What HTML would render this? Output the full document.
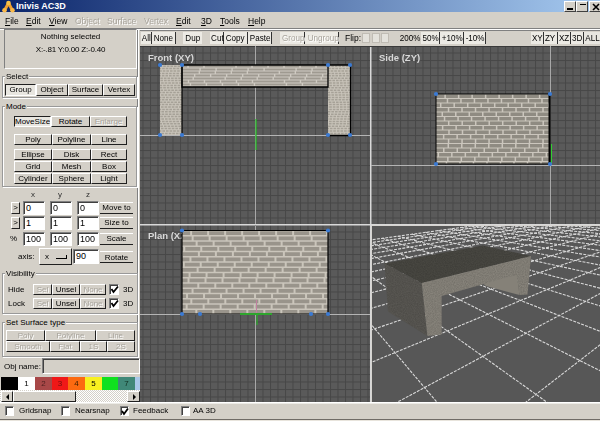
<!DOCTYPE html>
<html><head><meta charset="utf-8">
<style>
*{margin:0;padding:0;box-sizing:border-box}
html,body{width:600px;height:421px;overflow:hidden;background:#d4d0c8;font-family:"Liberation Sans",sans-serif;font-size:8px;color:#000}
.a{position:absolute}
.t{position:absolute;white-space:nowrap;line-height:10px}
.btn{position:absolute;border:1px solid;border-color:#fff #202020 #202020 #fff;background:#d4d0c8;text-align:center;line-height:9px;white-space:nowrap;overflow:hidden;font-size:8px}
.dis{color:#a8a49c;text-shadow:1px 1px 0 #fff}
.prs{border-color:#202020 #fff #fff #202020;background:#e8e6e0}
.grp{position:absolute;border:1px solid #999;box-shadow:1px 1px 0 #fff, inset 1px 1px 0 #fff}
.glab{position:absolute;background:#d4d0c8;padding:0 1px;line-height:9px;white-space:nowrap;margin-top:1px}
.fld{position:absolute;background:#fff;border:1px solid;border-color:#808080 #fff #fff #808080;box-shadow:inset 1px 1px 0 #404040;line-height:13px;padding-left:2px;white-space:nowrap;font-size:9px}
.tb{position:absolute;top:32px;height:12px;border-right:1px solid #303030;background:#eceae4;text-align:center;line-height:12px;white-space:nowrap;font-size:9.5px;overflow:visible}
.tb span{display:inline-block;transform:scaleX(.85);transform-origin:50% 50%}
.fb{position:absolute;border-top:1px solid #fff;border-bottom:1px solid #202020;text-align:center;line-height:10px;white-space:nowrap}
.cb{position:absolute;width:9px;height:10px;background:#fff;border:1px solid;border-color:#808080 #fff #fff #808080;box-shadow:inset 1px 1px 0 #404040}
.vp{position:absolute;overflow:hidden}
</style></head><body><div id="root" style="position:absolute;left:0;top:0;width:600px;height:421px;overflow:hidden;filter:blur(0.3px)">

<!-- title bar -->
<div class="a" style="left:0;top:0;width:600px;height:12px;background:linear-gradient(90deg,#0a246a 0%,#a6caf0 100%)"></div>
<svg class="a" style="left:2px;top:0" width="13" height="13" viewBox="0 0 13 13">
  <path d="M6.5 3 L2.5 10.5 M6.5 3 L10.5 10.5" stroke="#f0a030" stroke-width="3" stroke-linecap="round" fill="none"/>
  <circle cx="6.5" cy="3" r="2.3" fill="#f8c048"/>
  <circle cx="2.5" cy="10.3" r="2.3" fill="#f8b848"/>
  <circle cx="10.5" cy="10.3" r="2.3" fill="#f8b848"/>
</svg>
<div class="t" style="left:16px;top:1px;color:#fff;font-weight:bold;font-size:9px;letter-spacing:0">Inivis AC3D</div>
<div class="btn" style="left:564px;top:1px;width:12px;height:11px;border-color:#fff #404040 #404040 #fff"><div class="a" style="left:2px;top:6px;width:6px;height:1.5px;background:#000"></div></div>
<div class="btn" style="left:576px;top:1px;width:12px;height:11px;border-color:#fff #404040 #404040 #fff"><div class="a" style="left:3px;top:1.5px;width:6px;height:1.5px;background:#000"></div></div>
<div class="btn" style="left:589px;top:1px;width:12px;height:11px;border-color:#fff #404040 #404040 #fff"><svg class="a" style="left:2px;top:1px" width="8" height="8"><path d="M1 1 L7 7 M7 1 L1 7" stroke="#000" stroke-width="1.6"/></svg></div>

<!-- menu -->
<div class="t" style="left:5px;top:16px;font-size:8.5px"><u>F</u>ile</div>
<div class="t" style="left:26px;top:16px;font-size:8.5px"><u>E</u>dit</div>
<div class="t" style="left:49px;top:16px;font-size:8.5px"><u>V</u>iew</div>
<div class="t dis" style="left:75px;top:16px;font-size:8.5px">Object</div>
<div class="t dis" style="left:107px;top:16px;font-size:8.5px">Surface</div>
<div class="t dis" style="left:144px;top:16px;font-size:8.5px">Vertex</div>
<div class="t" style="left:176px;top:16px;font-size:8.5px"><u>E</u>dit</div>
<div class="t" style="left:201px;top:16px;font-size:8.5px"><u>3</u>D</div>
<div class="t" style="left:220px;top:16px;font-size:8.5px"><u>T</u>ools</div>
<div class="t" style="left:248px;top:16px;font-size:8.5px"><u>H</u>elp</div>
<div class="a" style="left:0;top:28px;width:600px;height:1px;background:#808080"></div>
<div class="a" style="left:0;top:29px;width:600px;height:1px;background:#fff"></div>

<!-- left panel -->
<div class="a" style="left:137px;top:30px;width:1px;height:328px;background:#808080"></div>
<div class="a" style="left:138px;top:30px;width:1px;height:328px;background:#fff"></div>

<div class="a" style="left:4px;top:29px;width:133px;height:40px;border:1px solid;border-color:#808080 #fff #fff #808080"></div>
<div class="t" style="left:4px;top:32px;width:133px;text-align:center">Nothing selected</div>
<div class="t" style="left:4px;top:45px;width:133px;text-align:center;letter-spacing:-0.2px">X:-.81 Y:0.00 Z:-0.40</div>

<div class="grp" style="left:2px;top:76px;width:135px;height:22px"></div>
<div class="glab" style="left:5px;top:71px">Select</div>
<div class="btn prs" style="left:5px;top:84px;width:31px;height:12px;line-height:10px">Group</div>
<div class="btn" style="left:36px;top:84px;width:32px;height:12px;line-height:10px">Object</div>
<div class="btn" style="left:68px;top:84px;width:35px;height:12px;line-height:10px">Surface</div>
<div class="btn" style="left:103px;top:84px;width:32px;height:12px;line-height:10px">Vertex</div>

<div class="grp" style="left:2px;top:106px;width:135px;height:81px"></div>
<div class="glab" style="left:5px;top:101px">Mode</div>
<div class="btn prs" style="left:14px;top:116px;width:37px;height:11px">MoveSize</div>
<div class="btn" style="left:51px;top:116px;width:39px;height:11px">Rotate</div>
<div class="btn dis" style="left:90px;top:116px;width:37px;height:11px">Enlarge</div>
<div class="btn" style="left:14px;top:134px;width:38px;height:11px">Poly</div>
<div class="btn" style="left:52px;top:134px;width:39px;height:11px">Polyline</div>
<div class="btn" style="left:91px;top:134px;width:36px;height:11px">Line</div>
<div class="btn" style="left:14px;top:149px;width:38px;height:11px">Ellipse</div>
<div class="btn" style="left:52px;top:149px;width:39px;height:11px">Disk</div>
<div class="btn" style="left:91px;top:149px;width:36px;height:11px">Rect</div>
<div class="btn" style="left:14px;top:161px;width:38px;height:11px">Grid</div>
<div class="btn" style="left:52px;top:161px;width:39px;height:11px">Mesh</div>
<div class="btn" style="left:91px;top:161px;width:36px;height:11px">Box</div>
<div class="btn" style="left:14px;top:173px;width:38px;height:11px">Cylinder</div>
<div class="btn" style="left:52px;top:173px;width:39px;height:11px">Sphere</div>
<div class="btn" style="left:91px;top:173px;width:36px;height:11px">Light</div>

<div class="t" style="left:31px;top:190px;color:#303030">x</div>
<div class="t" style="left:58px;top:190px;color:#303030">y</div>
<div class="t" style="left:86px;top:190px;color:#303030">z</div>

<div class="btn" style="left:11px;top:202px;width:9px;height:12px;line-height:10px">&gt;</div>
<div class="fld" style="left:23px;top:201px;width:22px;height:14px">0</div>
<div class="fld" style="left:50px;top:201px;width:22px;height:14px">0</div>
<div class="fld" style="left:77px;top:201px;width:22px;height:14px">0</div>
<div class="fb" style="left:100px;top:202px;width:33px;height:12px">Move to</div>

<div class="btn" style="left:11px;top:217px;width:9px;height:12px;line-height:10px">&gt;</div>
<div class="fld" style="left:23px;top:216px;width:22px;height:14px">1</div>
<div class="fld" style="left:50px;top:216px;width:22px;height:14px">1</div>
<div class="fld" style="left:77px;top:216px;width:22px;height:14px">1</div>
<div class="fb" style="left:100px;top:217px;width:33px;height:12px">Size to</div>

<div class="t" style="left:10px;top:234px">%</div>
<div class="fld" style="left:23px;top:232px;width:22px;height:14px">100</div>
<div class="fld" style="left:50px;top:232px;width:22px;height:14px">100</div>
<div class="fld" style="left:77px;top:232px;width:22px;height:14px">100</div>
<div class="fb" style="left:100px;top:233px;width:33px;height:12px">Scale</div>

<div class="t" style="left:18px;top:252px">axis:</div>
<div class="btn" style="left:39px;top:248px;width:33px;height:17px;line-height:15px;text-align:left;padding-left:5px">x<div class="a" style="left:16px;top:9px;width:11px;height:1px;background:#000"></div><div class="a" style="left:26px;top:6px;width:1px;height:4px;background:#000"></div></div>
<div class="fld" style="left:73px;top:249px;width:26px;height:15px;line-height:12px">90</div>
<div class="fb" style="left:100px;top:251px;width:33px;height:12px;line-height:11px">Rotate</div>

<div class="grp" style="left:2px;top:273px;width:136px;height:41px"></div>
<div class="glab" style="left:5px;top:268px">Visibility</div>
<div class="t" style="left:8px;top:285px">Hide</div>
<div class="btn dis" style="left:33px;top:284px;width:19px;height:11px">Sel</div>
<div class="btn" style="left:52px;top:284px;width:28px;height:11px">Unsel</div>
<div class="btn dis" style="left:80px;top:284px;width:26px;height:11px">None</div>
<div class="cb" style="left:109px;top:284px;width:10px;height:11px"></div>
<svg class="a" style="left:110px;top:285px" width="9" height="9"><path d="M1.5 4 L3.5 7 L8 1.5" stroke="#000" stroke-width="1.8" fill="none"/></svg>
<div class="t" style="left:123px;top:285px">3D</div>
<div class="t" style="left:8px;top:299px">Lock</div>
<div class="btn dis" style="left:33px;top:298px;width:19px;height:11px">Sel</div>
<div class="btn" style="left:52px;top:298px;width:28px;height:11px">Unsel</div>
<div class="btn dis" style="left:80px;top:298px;width:26px;height:11px">None</div>
<div class="cb" style="left:109px;top:298px;width:10px;height:11px"></div>
<svg class="a" style="left:110px;top:299px" width="9" height="9"><path d="M1.5 4 L3.5 7 L8 1.5" stroke="#000" stroke-width="1.8" fill="none"/></svg>
<div class="t" style="left:123px;top:299px">3D</div>

<div class="grp" style="left:2px;top:322px;width:136px;height:35px"></div>
<div class="glab" style="left:5px;top:317px">Set Surface type</div>
<div class="btn dis" style="left:6px;top:330px;width:39px;height:11px">Poly</div>
<div class="btn dis" style="left:45px;top:330px;width:51px;height:11px">Polyline</div>
<div class="btn dis" style="left:96px;top:330px;width:39px;height:11px">Line</div>
<div class="btn dis" style="left:6px;top:341px;width:44px;height:11px">Smooth</div>
<div class="btn dis" style="left:50px;top:341px;width:30px;height:11px">Flat</div>
<div class="btn dis" style="left:80px;top:341px;width:27px;height:11px">1S</div>
<div class="btn dis" style="left:107px;top:341px;width:28px;height:11px">2S</div>

<div class="t" style="left:4px;top:362px;font-size:8px">Obj name:</div>
<div class="a" style="left:42px;top:358px;width:98px;height:16px;background:#d4d0c8;border:1px solid;border-color:#808080 #fff #fff #808080;box-shadow:inset 1px 1px 0 #404040"></div>

<!-- palette -->
<div class="a" style="left:1px;top:377px;width:17px;height:13px;background:#000"></div>
<div class="a" style="left:18px;top:377px;width:17px;height:13px;background:#fff;text-align:center;line-height:13px">1</div>
<div class="a" style="left:35px;top:377px;width:17px;height:13px;background:#a84848;text-align:center;line-height:13px;color:#502020">2</div>
<div class="a" style="left:52px;top:377px;width:16px;height:13px;background:#f01818;text-align:center;line-height:13px;color:#701010">3</div>
<div class="a" style="left:68px;top:377px;width:17px;height:13px;background:#fc6a10;text-align:center;line-height:13px;color:#402000">4</div>
<div class="a" style="left:85px;top:377px;width:17px;height:13px;background:#f8f020;text-align:center;line-height:13px">5</div>
<div class="a" style="left:102px;top:377px;width:16px;height:13px;background:#10e020;text-align:center;line-height:13px;color:#10e020">6</div>
<div class="a" style="left:118px;top:377px;width:17px;height:13px;background:#408878;text-align:center;line-height:13px;color:#103020">7</div>
<div class="a" style="left:135px;top:377px;width:5px;height:13px;background:#a8c8e8"></div>
<!-- scrollbar -->
<div class="a" style="left:0;top:390px;width:140px;height:12px;background:repeating-conic-gradient(#fff 0 25%,#d4d0c8 0 50%) 0 0/2px 2px"></div>
<div class="btn" style="left:1px;top:391px;width:12px;height:11px"><svg class="a" style="left:3px;top:2px" width="5" height="6"><path d="M4 0 L1 3 L4 6Z" fill="#000"/></svg></div>
<div class="btn" style="left:13px;top:391px;width:63px;height:11px"></div>
<div class="btn" style="left:127px;top:391px;width:13px;height:11px"><svg class="a" style="left:4px;top:2px" width="5" height="6"><path d="M1 0 L4 3 L1 6Z" fill="#000"/></svg></div>

<!-- status bar -->
<div class="a" style="left:0;top:402px;width:600px;height:1px;background:#fff"></div>
<div class="a" style="left:0;top:403px;width:600px;height:1px;background:#ecebe6"></div>
<div class="cb" style="left:5px;top:406px"></div>
<div class="t" style="left:19px;top:406px">Gridsnap</div>
<div class="cb" style="left:61px;top:406px"></div>
<div class="t" style="left:75px;top:406px">Nearsnap</div>
<div class="cb" style="left:120px;top:406px"></div>
<svg class="a" style="left:121px;top:407px" width="8" height="9"><path d="M1 4 L3 7 L7 1.5" stroke="#000" stroke-width="1.8" fill="none"/></svg>
<div class="t" style="left:133px;top:406px">Feedback</div>
<div class="cb" style="left:181px;top:406px"></div>
<div class="t" style="left:193px;top:406px">AA 3D</div>
<div class="a" style="left:0;top:419px;width:600px;height:1px;background:#706c66"></div>
<div class="a" style="left:0;top:420px;width:600px;height:1px;background:#e8e4dc"></div>

<!-- toolbar -->
<div class="a" style="left:140px;top:30px;width:460px;height:1px;background:#808080"></div>
<div class="tb" style="left:141px;width:11px"><span>All</span></div>
<div class="tb" style="left:152px;width:24px"><span>None</span></div>
<div class="tb" style="left:183px;width:19px;border-right:0"><span>Dup</span></div>
<div class="tb" style="left:210px;width:14px"><span>Cut</span></div>
<div class="tb" style="left:224px;width:24px"><span>Copy</span></div>
<div class="tb" style="left:248px;width:24px"><span>Paste</span></div>
<div class="tb dis" style="left:280px;width:25px"><span>Group</span></div>
<div class="tb dis" style="left:305px;width:34px"><span>Ungroup</span></div>
<div class="t" style="left:345px;top:33px;font-size:8.5px">Flip:</div>
<div class="a" style="left:362px;top:33px;width:8px;height:10px;background:#e4e2dc;border:1px solid #c0bcb4"></div>
<div class="a" style="left:372px;top:33px;width:8px;height:10px;background:#e4e2dc;border:1px solid #c0bcb4"></div>
<div class="a" style="left:381px;top:33px;width:8px;height:10px;background:#e4e2dc;border:1px solid #c0bcb4"></div>
<div class="tb" style="left:398px;width:23px;background:transparent;border-right:0"><span>200%</span></div>
<div class="tb" style="left:421px;width:19px"><span>50%</span></div>
<div class="tb" style="left:440px;width:24px"><span>+10%</span></div>
<div class="tb" style="left:464px;width:22px"><span>-10%</span></div>
<div class="tb" style="left:531px;width:13px"><span>XY</span></div>
<div class="tb" style="left:544px;width:14px"><span>ZY</span></div>
<div class="tb" style="left:558px;width:13px"><span>XZ</span></div>
<div class="tb" style="left:571px;width:13px"><span>3D</span></div>
<div class="tb" style="left:584px;width:16px;border-color:#404040;border-right:0;background:#e8e6e0"><span>ALL</span></div>

<!-- viewports -->
<svg class="a" style="left:0;top:0" width="600" height="421">
<defs>
<pattern id="gF" width="7.5" height="7.5" patternUnits="userSpaceOnUse" x="255" y="135">
 <rect width="7.5" height="7.5" fill="#5a5a5a"/><rect width="1" height="7.5" fill="#474747"/><rect width="7.5" height="1" fill="#474747"/>
</pattern>
<pattern id="gS" width="7.5" height="7.5" patternUnits="userSpaceOnUse" x="550" y="165">
 <rect width="7.5" height="7.5" fill="#5a5a5a"/><rect width="1" height="7.5" fill="#474747"/><rect width="7.5" height="1" fill="#474747"/>
</pattern>
<pattern id="gP" width="7.5" height="7.5" patternUnits="userSpaceOnUse" x="255" y="314">
 <rect width="7.5" height="7.5" fill="#5a5a5a"/><rect width="1" height="7.5" fill="#474747"/><rect width="7.5" height="1" fill="#474747"/>
</pattern>
<clipPath id="c3d"><rect x="372" y="226" width="228" height="176"/></clipPath>
</defs>
<rect x="140" y="46" width="230" height="178" fill="url(#gF)"/>
<rect x="371" y="46" width="229" height="178" fill="url(#gS)"/>
<rect x="140" y="225" width="230" height="177" fill="url(#gP)"/>
<rect x="370" y="46" width="1.5" height="356" fill="#d8d8d8"/>
<rect x="140" y="224" width="460" height="1.5" fill="#d8d8d8"/>
<rect x="140" y="46" width="460" height="1" fill="#3a3a3a"/>
<line x1="140" y1="135.5" x2="370" y2="135.5" stroke="#b4b4b4" stroke-width="1"/>
<line x1="255.5" y1="46" x2="255.5" y2="224" stroke="#a8a8a8" stroke-width="1"/>
<text x="148" y="61" fill="#d8d8d8" font-family="Liberation Sans" font-weight="bold" font-size="9.5">Front (XY)</text>
<rect x="160" y="65" width="22" height="70" fill="#c9c4ba"/><path fill="#a6a197" d="M160.00 65.45H162.24V66.95H160.00ZM163.24 65.45H165.84V66.95H163.24ZM166.84 65.45H169.44V66.95H166.84ZM170.44 65.45H173.04V66.95H170.44ZM174.04 65.45H176.64V66.95H174.04ZM177.64 65.45H180.24V66.95H177.64ZM181.24 65.45H182.00V66.95H181.24ZM160.00 67.85H161.14V69.35H160.00ZM162.14 67.85H164.74V69.35H162.14ZM165.74 67.85H168.34V69.35H165.74ZM169.34 67.85H171.94V69.35H169.34ZM172.94 67.85H175.54V69.35H172.94ZM176.54 67.85H179.14V69.35H176.54ZM180.14 67.85H182.00V69.35H180.14ZM160.00 70.25H161.77V71.75H160.00ZM162.77 70.25H165.37V71.75H162.77ZM166.37 70.25H168.97V71.75H166.37ZM169.97 70.25H172.57V71.75H169.97ZM173.57 70.25H176.17V71.75H173.57ZM177.17 70.25H179.77V71.75H177.17ZM180.77 70.25H182.00V71.75H180.77ZM160.00 72.65H160.93V74.15H160.00ZM161.93 72.65H164.53V74.15H161.93ZM165.53 72.65H168.13V74.15H165.53ZM169.13 72.65H171.73V74.15H169.13ZM172.73 72.65H175.33V74.15H172.73ZM176.33 72.65H178.93V74.15H176.33ZM179.93 72.65H182.00V74.15H179.93ZM160.00 75.05H160.85V76.55H160.00ZM161.85 75.05H164.45V76.55H161.85ZM165.45 75.05H168.05V76.55H165.45ZM169.05 75.05H171.65V76.55H169.05ZM172.65 75.05H175.25V76.55H172.65ZM176.25 75.05H178.85V76.55H176.25ZM179.85 75.05H182.00V76.55H179.85ZM160.26 77.45H162.86V78.95H160.26ZM163.86 77.45H166.46V78.95H163.86ZM167.46 77.45H170.06V78.95H167.46ZM171.06 77.45H173.66V78.95H171.06ZM174.66 77.45H177.26V78.95H174.66ZM178.26 77.45H180.86V78.95H178.26ZM181.86 77.45H182.00V78.95H181.86ZM160.45 79.85H163.05V81.35H160.45ZM164.05 79.85H166.65V81.35H164.05ZM167.65 79.85H170.25V81.35H167.65ZM171.25 79.85H173.85V81.35H171.25ZM174.85 79.85H177.45V81.35H174.85ZM178.45 79.85H181.05V81.35H178.45ZM160.00 82.25H160.09V83.75H160.00ZM161.09 82.25H163.69V83.75H161.09ZM164.69 82.25H167.29V83.75H164.69ZM168.29 82.25H170.89V83.75H168.29ZM171.89 82.25H174.49V83.75H171.89ZM175.49 82.25H178.09V83.75H175.49ZM179.09 82.25H181.69V83.75H179.09ZM160.00 84.65H162.17V86.15H160.00ZM163.17 84.65H165.77V86.15H163.17ZM166.77 84.65H169.37V86.15H166.77ZM170.37 84.65H172.97V86.15H170.37ZM173.97 84.65H176.57V86.15H173.97ZM177.57 84.65H180.17V86.15H177.57ZM181.17 84.65H182.00V86.15H181.17ZM160.00 87.05H162.26V88.55H160.00ZM163.26 87.05H165.86V88.55H163.26ZM166.86 87.05H169.46V88.55H166.86ZM170.46 87.05H173.06V88.55H170.46ZM174.06 87.05H176.66V88.55H174.06ZM177.66 87.05H180.26V88.55H177.66ZM181.26 87.05H182.00V88.55H181.26ZM160.52 89.45H163.12V90.95H160.52ZM164.12 89.45H166.72V90.95H164.12ZM167.72 89.45H170.32V90.95H167.72ZM171.32 89.45H173.92V90.95H171.32ZM174.92 89.45H177.52V90.95H174.92ZM178.52 89.45H181.12V90.95H178.52ZM160.00 91.85H161.41V93.35H160.00ZM162.41 91.85H165.01V93.35H162.41ZM166.01 91.85H168.61V93.35H166.01ZM169.61 91.85H172.21V93.35H169.61ZM173.21 91.85H175.81V93.35H173.21ZM176.81 91.85H179.41V93.35H176.81ZM180.41 91.85H182.00V93.35H180.41ZM160.00 94.25H160.09V95.75H160.00ZM161.09 94.25H163.69V95.75H161.09ZM164.69 94.25H167.29V95.75H164.69ZM168.29 94.25H170.89V95.75H168.29ZM171.89 94.25H174.49V95.75H171.89ZM175.49 94.25H178.09V95.75H175.49ZM179.09 94.25H181.69V95.75H179.09ZM160.00 96.65H161.39V98.15H160.00ZM162.39 96.65H164.99V98.15H162.39ZM165.99 96.65H168.59V98.15H165.99ZM169.59 96.65H172.19V98.15H169.59ZM173.19 96.65H175.79V98.15H173.19ZM176.79 96.65H179.39V98.15H176.79ZM180.39 96.65H182.00V98.15H180.39ZM160.00 99.05H160.80V100.55H160.00ZM161.80 99.05H164.40V100.55H161.80ZM165.40 99.05H168.00V100.55H165.40ZM169.00 99.05H171.60V100.55H169.00ZM172.60 99.05H175.20V100.55H172.60ZM176.20 99.05H178.80V100.55H176.20ZM179.80 99.05H182.00V100.55H179.80ZM160.00 101.45H162.56V102.95H160.00ZM163.56 101.45H166.16V102.95H163.56ZM167.16 101.45H169.76V102.95H167.16ZM170.76 101.45H173.36V102.95H170.76ZM174.36 101.45H176.96V102.95H174.36ZM177.96 101.45H180.56V102.95H177.96ZM181.56 101.45H182.00V102.95H181.56ZM160.00 103.85H160.81V105.35H160.00ZM161.81 103.85H164.41V105.35H161.81ZM165.41 103.85H168.01V105.35H165.41ZM169.01 103.85H171.61V105.35H169.01ZM172.61 103.85H175.21V105.35H172.61ZM176.21 103.85H178.81V105.35H176.21ZM179.81 103.85H182.00V105.35H179.81ZM160.98 106.25H163.58V107.75H160.98ZM164.58 106.25H167.18V107.75H164.58ZM168.18 106.25H170.78V107.75H168.18ZM171.78 106.25H174.38V107.75H171.78ZM175.38 106.25H177.98V107.75H175.38ZM178.98 106.25H181.58V107.75H178.98ZM160.00 108.65H161.22V110.15H160.00ZM162.22 108.65H164.82V110.15H162.22ZM165.82 108.65H168.42V110.15H165.82ZM169.42 108.65H172.02V110.15H169.42ZM173.02 108.65H175.62V110.15H173.02ZM176.62 108.65H179.22V110.15H176.62ZM180.22 108.65H182.00V110.15H180.22ZM160.00 111.05H160.43V112.55H160.00ZM161.43 111.05H164.03V112.55H161.43ZM165.03 111.05H167.63V112.55H165.03ZM168.63 111.05H171.23V112.55H168.63ZM172.23 111.05H174.83V112.55H172.23ZM175.83 111.05H178.43V112.55H175.83ZM179.43 111.05H182.00V112.55H179.43ZM160.00 113.45H160.68V114.95H160.00ZM161.68 113.45H164.28V114.95H161.68ZM165.28 113.45H167.88V114.95H165.28ZM168.88 113.45H171.48V114.95H168.88ZM172.48 113.45H175.08V114.95H172.48ZM176.08 113.45H178.68V114.95H176.08ZM179.68 113.45H182.00V114.95H179.68ZM160.27 115.85H162.87V117.35H160.27ZM163.87 115.85H166.47V117.35H163.87ZM167.47 115.85H170.07V117.35H167.47ZM171.07 115.85H173.67V117.35H171.07ZM174.67 115.85H177.27V117.35H174.67ZM178.27 115.85H180.87V117.35H178.27ZM181.87 115.85H182.00V117.35H181.87ZM160.00 118.25H160.37V119.75H160.00ZM161.37 118.25H163.97V119.75H161.37ZM164.97 118.25H167.57V119.75H164.97ZM168.57 118.25H171.17V119.75H168.57ZM172.17 118.25H174.77V119.75H172.17ZM175.77 118.25H178.37V119.75H175.77ZM179.37 118.25H181.97V119.75H179.37ZM160.00 120.65H160.97V122.15H160.00ZM161.97 120.65H164.57V122.15H161.97ZM165.57 120.65H168.17V122.15H165.57ZM169.17 120.65H171.77V122.15H169.17ZM172.77 120.65H175.37V122.15H172.77ZM176.37 120.65H178.97V122.15H176.37ZM179.97 120.65H182.00V122.15H179.97ZM160.00 123.05H162.02V124.55H160.00ZM163.02 123.05H165.62V124.55H163.02ZM166.62 123.05H169.22V124.55H166.62ZM170.22 123.05H172.82V124.55H170.22ZM173.82 123.05H176.42V124.55H173.82ZM177.42 123.05H180.02V124.55H177.42ZM181.02 123.05H182.00V124.55H181.02ZM160.39 125.45H162.99V126.95H160.39ZM163.99 125.45H166.59V126.95H163.99ZM167.59 125.45H170.19V126.95H167.59ZM171.19 125.45H173.79V126.95H171.19ZM174.79 125.45H177.39V126.95H174.79ZM178.39 125.45H180.99V126.95H178.39ZM181.99 125.45H182.00V126.95H181.99ZM160.98 127.85H163.58V129.35H160.98ZM164.58 127.85H167.18V129.35H164.58ZM168.18 127.85H170.78V129.35H168.18ZM171.78 127.85H174.38V129.35H171.78ZM175.38 127.85H177.98V129.35H175.38ZM178.98 127.85H181.58V129.35H178.98ZM160.00 130.25H161.40V131.75H160.00ZM162.40 130.25H165.00V131.75H162.40ZM166.00 130.25H168.60V131.75H166.00ZM169.60 130.25H172.20V131.75H169.60ZM173.20 130.25H175.80V131.75H173.20ZM176.80 130.25H179.40V131.75H176.80ZM180.40 130.25H182.00V131.75H180.40ZM160.00 132.65H160.51V134.15H160.00ZM161.51 132.65H164.11V134.15H161.51ZM165.11 132.65H167.71V134.15H165.11ZM168.71 132.65H171.31V134.15H168.71ZM172.31 132.65H174.91V134.15H172.31ZM175.91 132.65H178.51V134.15H175.91ZM179.51 132.65H182.00V134.15H179.51Z"/>
<rect x="328" y="65" width="22" height="70" fill="#c9c4ba"/><path fill="#a6a197" d="M328.00 65.45H330.25V66.95H328.00ZM331.25 65.45H333.85V66.95H331.25ZM334.85 65.45H337.45V66.95H334.85ZM338.45 65.45H341.05V66.95H338.45ZM342.05 65.45H344.65V66.95H342.05ZM345.65 65.45H348.25V66.95H345.65ZM349.25 65.45H350.00V66.95H349.25ZM328.13 67.85H330.73V69.35H328.13ZM331.73 67.85H334.33V69.35H331.73ZM335.33 67.85H337.93V69.35H335.33ZM338.93 67.85H341.53V69.35H338.93ZM342.53 67.85H345.13V69.35H342.53ZM346.13 67.85H348.73V69.35H346.13ZM349.73 67.85H350.00V69.35H349.73ZM328.00 70.25H329.67V71.75H328.00ZM330.67 70.25H333.27V71.75H330.67ZM334.27 70.25H336.87V71.75H334.27ZM337.87 70.25H340.47V71.75H337.87ZM341.47 70.25H344.07V71.75H341.47ZM345.07 70.25H347.67V71.75H345.07ZM348.67 70.25H350.00V71.75H348.67ZM328.00 72.65H330.54V74.15H328.00ZM331.54 72.65H334.14V74.15H331.54ZM335.14 72.65H337.74V74.15H335.14ZM338.74 72.65H341.34V74.15H338.74ZM342.34 72.65H344.94V74.15H342.34ZM345.94 72.65H348.54V74.15H345.94ZM349.54 72.65H350.00V74.15H349.54ZM328.26 75.05H330.86V76.55H328.26ZM331.86 75.05H334.46V76.55H331.86ZM335.46 75.05H338.06V76.55H335.46ZM339.06 75.05H341.66V76.55H339.06ZM342.66 75.05H345.26V76.55H342.66ZM346.26 75.05H348.86V76.55H346.26ZM349.86 75.05H350.00V76.55H349.86ZM328.00 77.45H329.65V78.95H328.00ZM330.65 77.45H333.25V78.95H330.65ZM334.25 77.45H336.85V78.95H334.25ZM337.85 77.45H340.45V78.95H337.85ZM341.45 77.45H344.05V78.95H341.45ZM345.05 77.45H347.65V78.95H345.05ZM348.65 77.45H350.00V78.95H348.65ZM328.80 79.85H331.40V81.35H328.80ZM332.40 79.85H335.00V81.35H332.40ZM336.00 79.85H338.60V81.35H336.00ZM339.60 79.85H342.20V81.35H339.60ZM343.20 79.85H345.80V81.35H343.20ZM346.80 79.85H349.40V81.35H346.80ZM328.00 82.25H328.22V83.75H328.00ZM329.22 82.25H331.82V83.75H329.22ZM332.82 82.25H335.42V83.75H332.82ZM336.42 82.25H339.02V83.75H336.42ZM340.02 82.25H342.62V83.75H340.02ZM343.62 82.25H346.22V83.75H343.62ZM347.22 82.25H349.82V83.75H347.22ZM328.00 84.65H328.35V86.15H328.00ZM329.35 84.65H331.95V86.15H329.35ZM332.95 84.65H335.55V86.15H332.95ZM336.55 84.65H339.15V86.15H336.55ZM340.15 84.65H342.75V86.15H340.15ZM343.75 84.65H346.35V86.15H343.75ZM347.35 84.65H349.95V86.15H347.35ZM328.00 87.05H330.30V88.55H328.00ZM331.30 87.05H333.90V88.55H331.30ZM334.90 87.05H337.50V88.55H334.90ZM338.50 87.05H341.10V88.55H338.50ZM342.10 87.05H344.70V88.55H342.10ZM345.70 87.05H348.30V88.55H345.70ZM349.30 87.05H350.00V88.55H349.30ZM328.00 89.45H329.17V90.95H328.00ZM330.17 89.45H332.77V90.95H330.17ZM333.77 89.45H336.37V90.95H333.77ZM337.37 89.45H339.97V90.95H337.37ZM340.97 89.45H343.57V90.95H340.97ZM344.57 89.45H347.17V90.95H344.57ZM348.17 89.45H350.00V90.95H348.17ZM328.00 91.85H330.10V93.35H328.00ZM331.10 91.85H333.70V93.35H331.10ZM334.70 91.85H337.30V93.35H334.70ZM338.30 91.85H340.90V93.35H338.30ZM341.90 91.85H344.50V93.35H341.90ZM345.50 91.85H348.10V93.35H345.50ZM349.10 91.85H350.00V93.35H349.10ZM328.00 94.25H330.48V95.75H328.00ZM331.48 94.25H334.08V95.75H331.48ZM335.08 94.25H337.68V95.75H335.08ZM338.68 94.25H341.28V95.75H338.68ZM342.28 94.25H344.88V95.75H342.28ZM345.88 94.25H348.48V95.75H345.88ZM349.48 94.25H350.00V95.75H349.48ZM328.12 96.65H330.72V98.15H328.12ZM331.72 96.65H334.32V98.15H331.72ZM335.32 96.65H337.92V98.15H335.32ZM338.92 96.65H341.52V98.15H338.92ZM342.52 96.65H345.12V98.15H342.52ZM346.12 96.65H348.72V98.15H346.12ZM349.72 96.65H350.00V98.15H349.72ZM328.00 99.05H330.33V100.55H328.00ZM331.33 99.05H333.93V100.55H331.33ZM334.93 99.05H337.53V100.55H334.93ZM338.53 99.05H341.13V100.55H338.53ZM342.13 99.05H344.73V100.55H342.13ZM345.73 99.05H348.33V100.55H345.73ZM349.33 99.05H350.00V100.55H349.33ZM328.76 101.45H331.36V102.95H328.76ZM332.36 101.45H334.96V102.95H332.36ZM335.96 101.45H338.56V102.95H335.96ZM339.56 101.45H342.16V102.95H339.56ZM343.16 101.45H345.76V102.95H343.16ZM346.76 101.45H349.36V102.95H346.76ZM328.00 103.85H328.12V105.35H328.00ZM329.12 103.85H331.72V105.35H329.12ZM332.72 103.85H335.32V105.35H332.72ZM336.32 103.85H338.92V105.35H336.32ZM339.92 103.85H342.52V105.35H339.92ZM343.52 103.85H346.12V105.35H343.52ZM347.12 103.85H349.72V105.35H347.12ZM328.00 106.25H328.20V107.75H328.00ZM329.20 106.25H331.80V107.75H329.20ZM332.80 106.25H335.40V107.75H332.80ZM336.40 106.25H339.00V107.75H336.40ZM340.00 106.25H342.60V107.75H340.00ZM343.60 106.25H346.20V107.75H343.60ZM347.20 106.25H349.80V107.75H347.20ZM328.00 108.65H328.22V110.15H328.00ZM329.22 108.65H331.82V110.15H329.22ZM332.82 108.65H335.42V110.15H332.82ZM336.42 108.65H339.02V110.15H336.42ZM340.02 108.65H342.62V110.15H340.02ZM343.62 108.65H346.22V110.15H343.62ZM347.22 108.65H349.82V110.15H347.22ZM328.00 111.05H330.40V112.55H328.00ZM331.40 111.05H334.00V112.55H331.40ZM335.00 111.05H337.60V112.55H335.00ZM338.60 111.05H341.20V112.55H338.60ZM342.20 111.05H344.80V112.55H342.20ZM345.80 111.05H348.40V112.55H345.80ZM349.40 111.05H350.00V112.55H349.40ZM328.00 113.45H329.98V114.95H328.00ZM330.98 113.45H333.58V114.95H330.98ZM334.58 113.45H337.18V114.95H334.58ZM338.18 113.45H340.78V114.95H338.18ZM341.78 113.45H344.38V114.95H341.78ZM345.38 113.45H347.98V114.95H345.38ZM348.98 113.45H350.00V114.95H348.98ZM328.00 115.85H328.84V117.35H328.00ZM329.84 115.85H332.44V117.35H329.84ZM333.44 115.85H336.04V117.35H333.44ZM337.04 115.85H339.64V117.35H337.04ZM340.64 115.85H343.24V117.35H340.64ZM344.24 115.85H346.84V117.35H344.24ZM347.84 115.85H350.00V117.35H347.84ZM328.00 118.25H328.47V119.75H328.00ZM329.47 118.25H332.07V119.75H329.47ZM333.07 118.25H335.67V119.75H333.07ZM336.67 118.25H339.27V119.75H336.67ZM340.27 118.25H342.87V119.75H340.27ZM343.87 118.25H346.47V119.75H343.87ZM347.47 118.25H350.00V119.75H347.47ZM328.00 120.65H328.02V122.15H328.00ZM329.02 120.65H331.62V122.15H329.02ZM332.62 120.65H335.22V122.15H332.62ZM336.22 120.65H338.82V122.15H336.22ZM339.82 120.65H342.42V122.15H339.82ZM343.42 120.65H346.02V122.15H343.42ZM347.02 120.65H349.62V122.15H347.02ZM328.93 123.05H331.53V124.55H328.93ZM332.53 123.05H335.13V124.55H332.53ZM336.13 123.05H338.73V124.55H336.13ZM339.73 123.05H342.33V124.55H339.73ZM343.33 123.05H345.93V124.55H343.33ZM346.93 123.05H349.53V124.55H346.93ZM328.19 125.45H330.79V126.95H328.19ZM331.79 125.45H334.39V126.95H331.79ZM335.39 125.45H337.99V126.95H335.39ZM338.99 125.45H341.59V126.95H338.99ZM342.59 125.45H345.19V126.95H342.59ZM346.19 125.45H348.79V126.95H346.19ZM349.79 125.45H350.00V126.95H349.79ZM328.00 127.85H328.92V129.35H328.00ZM329.92 127.85H332.52V129.35H329.92ZM333.52 127.85H336.12V129.35H333.52ZM337.12 127.85H339.72V129.35H337.12ZM340.72 127.85H343.32V129.35H340.72ZM344.32 127.85H346.92V129.35H344.32ZM347.92 127.85H350.00V129.35H347.92ZM328.00 130.25H328.68V131.75H328.00ZM329.68 130.25H332.28V131.75H329.68ZM333.28 130.25H335.88V131.75H333.28ZM336.88 130.25H339.48V131.75H336.88ZM340.48 130.25H343.08V131.75H340.48ZM344.08 130.25H346.68V131.75H344.08ZM347.68 130.25H350.00V131.75H347.68ZM328.00 132.65H329.28V134.15H328.00ZM330.28 132.65H332.88V134.15H330.28ZM333.88 132.65H336.48V134.15H333.88ZM337.48 132.65H340.08V134.15H337.48ZM341.08 132.65H343.68V134.15H341.08ZM344.68 132.65H347.28V134.15H344.68ZM348.28 132.65H350.00V134.15H348.28Z"/>
<rect x="182" y="65" width="146" height="22" fill="#cfcac2"/><path fill="#9f9a91" d="M182.00 65.50H187.33V67.50H182.00ZM188.73 65.50H203.33V67.50H188.73ZM204.73 65.50H235.33V67.50H204.73ZM236.73 65.50H251.33V67.50H236.73ZM252.73 65.50H267.33V67.50H252.73ZM268.73 65.50H283.33V67.50H268.73ZM284.73 65.50H299.33V67.50H284.73ZM300.73 65.50H315.33V67.50H300.73ZM316.73 65.50H328.00V67.50H316.73ZM182.00 68.50H199.40V70.50H182.00ZM200.80 68.50H215.40V70.50H200.80ZM216.80 68.50H231.40V70.50H216.80ZM232.80 68.50H247.40V70.50H232.80ZM248.80 68.50H263.40V70.50H248.80ZM264.80 68.50H295.40V70.50H264.80ZM296.80 68.50H311.40V70.50H296.80ZM312.80 68.50H327.40V70.50H312.80ZM182.00 71.50H198.64V73.50H182.00ZM200.04 71.50H214.64V73.50H200.04ZM216.04 71.50H230.64V73.50H216.04ZM232.04 71.50H246.64V73.50H232.04ZM248.04 71.50H278.64V73.50H248.04ZM280.04 71.50H294.64V73.50H280.04ZM296.04 71.50H310.64V73.50H296.04ZM312.04 71.50H326.64V73.50H312.04ZM182.00 74.50H193.95V76.50H182.00ZM195.35 74.50H209.95V76.50H195.35ZM211.35 74.50H225.95V76.50H211.35ZM227.35 74.50H241.95V76.50H227.35ZM243.35 74.50H257.95V76.50H243.35ZM259.35 74.50H273.95V76.50H259.35ZM275.35 74.50H289.95V76.50H275.35ZM291.35 74.50H305.95V76.50H291.35ZM307.35 74.50H321.95V76.50H307.35ZM323.35 74.50H328.00V76.50H323.35ZM182.00 77.50H192.52V79.50H182.00ZM193.92 77.50H224.52V79.50H193.92ZM225.92 77.50H240.52V79.50H225.92ZM241.92 77.50H256.52V79.50H241.92ZM257.92 77.50H272.52V79.50H257.92ZM273.92 77.50H288.52V79.50H273.92ZM289.92 77.50H304.52V79.50H289.92ZM305.92 77.50H320.52V79.50H305.92ZM321.92 77.50H328.00V79.50H321.92ZM182.00 80.50H187.76V82.50H182.00ZM189.16 80.50H203.76V82.50H189.16ZM205.16 80.50H219.76V82.50H205.16ZM221.16 80.50H235.76V82.50H221.16ZM237.16 80.50H251.76V82.50H237.16ZM253.16 80.50H283.76V82.50H253.16ZM285.16 80.50H299.76V82.50H285.16ZM301.16 80.50H315.76V82.50H301.16ZM317.16 80.50H328.00V82.50H317.16ZM182.00 83.50H189.74V85.50H182.00ZM191.14 83.50H205.74V85.50H191.14ZM207.14 83.50H221.74V85.50H207.14ZM223.14 83.50H237.74V85.50H223.14ZM239.14 83.50H253.74V85.50H239.14ZM255.14 83.50H285.74V85.50H255.14ZM287.14 83.50H301.74V85.50H287.14ZM303.14 83.50H328.00V85.50H303.14ZM182.00 86.50H191.44V87.00H182.00ZM192.84 86.50H223.44V87.00H192.84ZM224.84 86.50H239.44V87.00H224.84ZM240.84 86.50H255.44V87.00H240.84ZM256.84 86.50H271.44V87.00H256.84ZM272.84 86.50H287.44V87.00H272.84ZM288.84 86.50H303.44V87.00H288.84ZM304.84 86.50H328.00V87.00H304.84Z"/>
<line x1="256" y1="119" x2="256" y2="150" stroke="#20c020" stroke-width="1.2"/>
<path d="M182 87 V65 H328 V87 Z" fill="none" stroke="#000" stroke-width="1.3"/>
<path d="M182 65 V135" stroke="#000" stroke-width="1.2"/>
<path d="M328 65 H350.5 V135.5 H328" fill="none" stroke="#000" stroke-width="1.3"/>
<circle cx="160" cy="65" r="2.1" fill="#3a7ad4"/>
<circle cx="182" cy="65" r="2.1" fill="#3a7ad4"/>
<circle cx="328" cy="65" r="2.1" fill="#3a7ad4"/>
<circle cx="350" cy="65" r="2.1" fill="#3a7ad4"/>
<circle cx="160" cy="135" r="2.1" fill="#3a7ad4"/>
<circle cx="182" cy="135" r="2.1" fill="#3a7ad4"/>
<circle cx="328" cy="135" r="2.1" fill="#3a7ad4"/>
<circle cx="350" cy="135" r="2.1" fill="#3a7ad4"/>
<line x1="371" y1="165.5" x2="600" y2="165.5" stroke="#b4b4b4" stroke-width="1"/>
<line x1="550.5" y1="46" x2="550.5" y2="224" stroke="#a8a8a8" stroke-width="1"/>
<text x="379" y="61" fill="#d8d8d8" font-family="Liberation Sans" font-weight="bold" font-size="9.5">Side (ZY)</text>
<rect x="436" y="94" width="114" height="70" fill="#cbc6bd"/><path fill="#8f8b82" d="M436.00 94.60H444.38V97.90H436.00ZM445.88 94.60H457.88V97.90H445.88ZM459.38 94.60H471.38V97.90H459.38ZM472.88 94.60H484.88V97.90H472.88ZM486.38 94.60H498.38V97.90H486.38ZM499.88 94.60H511.88V97.90H499.88ZM513.38 94.60H525.38V97.90H513.38ZM526.88 94.60H538.88V97.90H526.88ZM540.38 94.60H550.00V97.90H540.38ZM436.00 99.10H446.71V102.40H436.00ZM448.21 99.10H460.21V102.40H448.21ZM461.71 99.10H473.71V102.40H461.71ZM475.21 99.10H487.21V102.40H475.21ZM488.71 99.10H500.71V102.40H488.71ZM502.21 99.10H514.21V102.40H502.21ZM515.71 99.10H527.71V102.40H515.71ZM529.21 99.10H541.21V102.40H529.21ZM542.71 99.10H550.00V102.40H542.71ZM436.00 103.60H439.96V106.90H436.00ZM441.46 103.60H453.46V106.90H441.46ZM454.96 103.60H466.96V106.90H454.96ZM468.46 103.60H480.46V106.90H468.46ZM481.96 103.60H493.96V106.90H481.96ZM495.46 103.60H507.46V106.90H495.46ZM508.96 103.60H520.96V106.90H508.96ZM522.46 103.60H534.46V106.90H522.46ZM535.96 103.60H547.96V106.90H535.96ZM549.46 103.60H550.00V106.90H549.46ZM436.00 108.10H447.77V111.40H436.00ZM449.27 108.10H461.27V111.40H449.27ZM462.77 108.10H474.77V111.40H462.77ZM476.27 108.10H488.27V111.40H476.27ZM489.77 108.10H501.77V111.40H489.77ZM503.27 108.10H515.27V111.40H503.27ZM516.77 108.10H528.77V111.40H516.77ZM530.27 108.10H542.27V111.40H530.27ZM543.77 108.10H550.00V111.40H543.77ZM436.00 112.60H441.52V115.90H436.00ZM443.02 112.60H455.02V115.90H443.02ZM456.52 112.60H468.52V115.90H456.52ZM470.02 112.60H482.02V115.90H470.02ZM483.52 112.60H495.52V115.90H483.52ZM497.02 112.60H509.02V115.90H497.02ZM510.52 112.60H522.52V115.90H510.52ZM524.02 112.60H536.02V115.90H524.02ZM537.52 112.60H549.52V115.90H537.52ZM436.00 117.10H443.81V120.40H436.00ZM445.31 117.10H457.31V120.40H445.31ZM458.81 117.10H470.81V120.40H458.81ZM472.31 117.10H484.31V120.40H472.31ZM485.81 117.10H497.81V120.40H485.81ZM499.31 117.10H511.31V120.40H499.31ZM512.81 117.10H524.81V120.40H512.81ZM526.31 117.10H538.31V120.40H526.31ZM539.81 117.10H550.00V120.40H539.81ZM436.00 121.60H447.97V124.90H436.00ZM449.47 121.60H461.47V124.90H449.47ZM462.97 121.60H474.97V124.90H462.97ZM476.47 121.60H488.47V124.90H476.47ZM489.97 121.60H501.97V124.90H489.97ZM503.47 121.60H515.47V124.90H503.47ZM516.97 121.60H528.97V124.90H516.97ZM530.47 121.60H542.47V124.90H530.47ZM543.97 121.60H550.00V124.90H543.97ZM436.00 126.10H441.90V129.40H436.00ZM443.40 126.10H455.40V129.40H443.40ZM456.90 126.10H468.90V129.40H456.90ZM470.40 126.10H482.40V129.40H470.40ZM483.90 126.10H495.90V129.40H483.90ZM497.40 126.10H509.40V129.40H497.40ZM510.90 126.10H522.90V129.40H510.90ZM524.40 126.10H536.40V129.40H524.40ZM537.90 126.10H549.90V129.40H537.90ZM436.24 130.60H448.24V133.90H436.24ZM449.74 130.60H461.74V133.90H449.74ZM463.24 130.60H475.24V133.90H463.24ZM476.74 130.60H488.74V133.90H476.74ZM490.24 130.60H502.24V133.90H490.24ZM503.74 130.60H515.74V133.90H503.74ZM517.24 130.60H529.24V133.90H517.24ZM530.74 130.60H542.74V133.90H530.74ZM544.24 130.60H550.00V133.90H544.24ZM436.00 135.10H442.90V138.40H436.00ZM444.40 135.10H456.40V138.40H444.40ZM457.90 135.10H469.90V138.40H457.90ZM471.40 135.10H483.40V138.40H471.40ZM484.90 135.10H496.90V138.40H484.90ZM498.40 135.10H510.40V138.40H498.40ZM511.90 135.10H523.90V138.40H511.90ZM525.40 135.10H537.40V138.40H525.40ZM538.90 135.10H550.00V138.40H538.90ZM436.00 139.60H447.81V142.90H436.00ZM449.31 139.60H461.31V142.90H449.31ZM462.81 139.60H474.81V142.90H462.81ZM476.31 139.60H488.31V142.90H476.31ZM489.81 139.60H501.81V142.90H489.81ZM503.31 139.60H515.31V142.90H503.31ZM516.81 139.60H528.81V142.90H516.81ZM530.31 139.60H542.31V142.90H530.31ZM543.81 139.60H550.00V142.90H543.81ZM436.00 144.10H447.53V147.40H436.00ZM449.03 144.10H461.03V147.40H449.03ZM462.53 144.10H474.53V147.40H462.53ZM476.03 144.10H488.03V147.40H476.03ZM489.53 144.10H501.53V147.40H489.53ZM503.03 144.10H515.03V147.40H503.03ZM516.53 144.10H528.53V147.40H516.53ZM530.03 144.10H542.03V147.40H530.03ZM543.53 144.10H550.00V147.40H543.53ZM436.00 148.60H443.02V151.90H436.00ZM444.52 148.60H456.52V151.90H444.52ZM458.02 148.60H470.02V151.90H458.02ZM471.52 148.60H483.52V151.90H471.52ZM485.02 148.60H497.02V151.90H485.02ZM498.52 148.60H510.52V151.90H498.52ZM512.02 148.60H524.02V151.90H512.02ZM525.52 148.60H537.52V151.90H525.52ZM539.02 148.60H550.00V151.90H539.02ZM436.00 153.10H437.59V156.40H436.00ZM439.09 153.10H451.09V156.40H439.09ZM452.59 153.10H464.59V156.40H452.59ZM466.09 153.10H478.09V156.40H466.09ZM479.59 153.10H491.59V156.40H479.59ZM493.09 153.10H505.09V156.40H493.09ZM506.59 153.10H518.59V156.40H506.59ZM520.09 153.10H532.09V156.40H520.09ZM533.59 153.10H545.59V156.40H533.59ZM547.09 153.10H550.00V156.40H547.09ZM436.00 157.60H447.08V160.90H436.00ZM448.58 157.60H460.58V160.90H448.58ZM462.08 157.60H474.08V160.90H462.08ZM475.58 157.60H487.58V160.90H475.58ZM489.08 157.60H501.08V160.90H489.08ZM502.58 157.60H514.58V160.90H502.58ZM516.08 157.60H528.08V160.90H516.08ZM529.58 157.60H541.58V160.90H529.58ZM543.08 157.60H550.00V160.90H543.08ZM436.00 162.10H445.74V164.00H436.00ZM447.24 162.10H459.24V164.00H447.24ZM460.74 162.10H472.74V164.00H460.74ZM474.24 162.10H486.24V164.00H474.24ZM487.74 162.10H499.74V164.00H487.74ZM501.24 162.10H513.24V164.00H501.24ZM514.74 162.10H526.74V164.00H514.74ZM528.24 162.10H540.24V164.00H528.24ZM541.74 162.10H550.00V164.00H541.74Z"/>
<path d="M436 164 V94 H550 V164 Z" fill="none" stroke="#000" stroke-width="1"/>
<path d="M549.5 94 V165" stroke="#000" stroke-width="2"/>
<line x1="551.5" y1="144" x2="551.5" y2="164" stroke="#30d030" stroke-width="1"/>
<circle cx="436" cy="94" r="2.1" fill="#3a7ad4"/>
<circle cx="550" cy="94" r="2.1" fill="#3a7ad4"/>
<circle cx="436" cy="164" r="2.1" fill="#3a7ad4"/>
<circle cx="550" cy="164" r="2.1" fill="#3a7ad4"/>
<line x1="140" y1="314.5" x2="370" y2="314.5" stroke="#b4b4b4" stroke-width="1"/>
<line x1="255.5" y1="226" x2="255.5" y2="402" stroke="#a8a8a8" stroke-width="1"/>
<text x="148" y="239" fill="#d8d8d8" font-family="Liberation Sans" font-weight="bold" font-size="9.5">Plan (XZ)</text>
<rect x="182" y="230.5" width="146" height="83.5" fill="#cac5bb"/><path fill="#99948b" d="M182.00 231.25H190.13V235.00H182.00ZM192.13 231.25H207.13V235.00H192.13ZM209.13 231.25H224.13V235.00H209.13ZM226.13 231.25H241.13V235.00H226.13ZM243.13 231.25H258.13V235.00H243.13ZM260.13 231.25H275.13V235.00H260.13ZM277.13 231.25H292.13V235.00H277.13ZM294.13 231.25H309.13V235.00H294.13ZM311.13 231.25H326.13V235.00H311.13ZM182.00 236.50H191.65V240.25H182.00ZM193.65 236.50H208.65V240.25H193.65ZM210.65 236.50H225.65V240.25H210.65ZM227.65 236.50H242.65V240.25H227.65ZM244.65 236.50H259.65V240.25H244.65ZM261.65 236.50H276.65V240.25H261.65ZM278.65 236.50H293.65V240.25H278.65ZM295.65 236.50H310.65V240.25H295.65ZM312.65 236.50H327.65V240.25H312.65ZM182.00 241.75H195.64V245.50H182.00ZM197.64 241.75H212.64V245.50H197.64ZM214.64 241.75H229.64V245.50H214.64ZM231.64 241.75H246.64V245.50H231.64ZM248.64 241.75H263.64V245.50H248.64ZM265.64 241.75H280.64V245.50H265.64ZM282.64 241.75H297.64V245.50H282.64ZM299.64 241.75H314.64V245.50H299.64ZM316.64 241.75H328.00V245.50H316.64ZM182.00 247.00H183.27V250.75H182.00ZM185.27 247.00H200.27V250.75H185.27ZM202.27 247.00H217.27V250.75H202.27ZM219.27 247.00H234.27V250.75H219.27ZM236.27 247.00H251.27V250.75H236.27ZM253.27 247.00H268.27V250.75H253.27ZM270.27 247.00H285.27V250.75H270.27ZM287.27 247.00H302.27V250.75H287.27ZM304.27 247.00H319.27V250.75H304.27ZM321.27 247.00H328.00V250.75H321.27ZM182.89 252.25H197.89V256.00H182.89ZM199.89 252.25H214.89V256.00H199.89ZM216.89 252.25H231.89V256.00H216.89ZM233.89 252.25H248.89V256.00H233.89ZM250.89 252.25H265.89V256.00H250.89ZM267.89 252.25H282.89V256.00H267.89ZM284.89 252.25H299.89V256.00H284.89ZM301.89 252.25H316.89V256.00H301.89ZM318.89 252.25H328.00V256.00H318.89ZM182.00 257.50H189.45V261.25H182.00ZM191.45 257.50H206.45V261.25H191.45ZM208.45 257.50H223.45V261.25H208.45ZM225.45 257.50H240.45V261.25H225.45ZM242.45 257.50H257.45V261.25H242.45ZM259.45 257.50H274.45V261.25H259.45ZM276.45 257.50H291.45V261.25H276.45ZM293.45 257.50H308.45V261.25H293.45ZM310.45 257.50H325.45V261.25H310.45ZM327.45 257.50H328.00V261.25H327.45ZM182.00 262.75H182.73V266.50H182.00ZM184.73 262.75H199.73V266.50H184.73ZM201.73 262.75H216.73V266.50H201.73ZM218.73 262.75H233.73V266.50H218.73ZM235.73 262.75H250.73V266.50H235.73ZM252.73 262.75H267.73V266.50H252.73ZM269.73 262.75H284.73V266.50H269.73ZM286.73 262.75H301.73V266.50H286.73ZM303.73 262.75H318.73V266.50H303.73ZM320.73 262.75H328.00V266.50H320.73ZM182.00 268.00H196.63V271.75H182.00ZM198.63 268.00H213.63V271.75H198.63ZM215.63 268.00H230.63V271.75H215.63ZM232.63 268.00H247.63V271.75H232.63ZM249.63 268.00H264.63V271.75H249.63ZM266.63 268.00H281.63V271.75H266.63ZM283.63 268.00H298.63V271.75H283.63ZM300.63 268.00H315.63V271.75H300.63ZM317.63 268.00H328.00V271.75H317.63ZM182.00 273.25H188.58V277.00H182.00ZM190.58 273.25H205.58V277.00H190.58ZM207.58 273.25H222.58V277.00H207.58ZM224.58 273.25H239.58V277.00H224.58ZM241.58 273.25H256.58V277.00H241.58ZM258.58 273.25H273.58V277.00H258.58ZM275.58 273.25H290.58V277.00H275.58ZM292.58 273.25H307.58V277.00H292.58ZM309.58 273.25H324.58V277.00H309.58ZM326.58 273.25H328.00V277.00H326.58ZM182.00 278.50H187.52V282.25H182.00ZM189.52 278.50H204.52V282.25H189.52ZM206.52 278.50H221.52V282.25H206.52ZM223.52 278.50H238.52V282.25H223.52ZM240.52 278.50H255.52V282.25H240.52ZM257.52 278.50H272.52V282.25H257.52ZM274.52 278.50H289.52V282.25H274.52ZM291.52 278.50H306.52V282.25H291.52ZM308.52 278.50H323.52V282.25H308.52ZM325.52 278.50H328.00V282.25H325.52ZM182.30 283.75H197.30V287.50H182.30ZM199.30 283.75H214.30V287.50H199.30ZM216.30 283.75H231.30V287.50H216.30ZM233.30 283.75H248.30V287.50H233.30ZM250.30 283.75H265.30V287.50H250.30ZM267.30 283.75H282.30V287.50H267.30ZM284.30 283.75H299.30V287.50H284.30ZM301.30 283.75H316.30V287.50H301.30ZM318.30 283.75H328.00V287.50H318.30ZM182.00 289.00H191.56V292.75H182.00ZM193.56 289.00H208.56V292.75H193.56ZM210.56 289.00H225.56V292.75H210.56ZM227.56 289.00H242.56V292.75H227.56ZM244.56 289.00H259.56V292.75H244.56ZM261.56 289.00H276.56V292.75H261.56ZM278.56 289.00H293.56V292.75H278.56ZM295.56 289.00H310.56V292.75H295.56ZM312.56 289.00H327.56V292.75H312.56ZM182.00 294.25H186.04V298.00H182.00ZM188.04 294.25H203.04V298.00H188.04ZM205.04 294.25H220.04V298.00H205.04ZM222.04 294.25H237.04V298.00H222.04ZM239.04 294.25H254.04V298.00H239.04ZM256.04 294.25H271.04V298.00H256.04ZM273.04 294.25H288.04V298.00H273.04ZM290.04 294.25H305.04V298.00H290.04ZM307.04 294.25H322.04V298.00H307.04ZM324.04 294.25H328.00V298.00H324.04ZM182.00 299.50H190.32V303.25H182.00ZM192.32 299.50H207.32V303.25H192.32ZM209.32 299.50H224.32V303.25H209.32ZM226.32 299.50H241.32V303.25H226.32ZM243.32 299.50H258.32V303.25H243.32ZM260.32 299.50H275.32V303.25H260.32ZM277.32 299.50H292.32V303.25H277.32ZM294.32 299.50H309.32V303.25H294.32ZM311.32 299.50H326.32V303.25H311.32ZM182.00 304.75H185.67V308.50H182.00ZM187.67 304.75H202.67V308.50H187.67ZM204.67 304.75H219.67V308.50H204.67ZM221.67 304.75H236.67V308.50H221.67ZM238.67 304.75H253.67V308.50H238.67ZM255.67 304.75H270.67V308.50H255.67ZM272.67 304.75H287.67V308.50H272.67ZM289.67 304.75H304.67V308.50H289.67ZM306.67 304.75H321.67V308.50H306.67ZM323.67 304.75H328.00V308.50H323.67ZM182.00 310.00H195.33V313.75H182.00ZM197.33 310.00H212.33V313.75H197.33ZM214.33 310.00H229.33V313.75H214.33ZM231.33 310.00H246.33V313.75H231.33ZM248.33 310.00H263.33V313.75H248.33ZM265.33 310.00H280.33V313.75H265.33ZM282.33 310.00H297.33V313.75H282.33ZM299.33 310.00H314.33V313.75H299.33ZM316.33 310.00H328.00V313.75H316.33Z"/>
<line x1="256.5" y1="300" x2="256.5" y2="314" stroke="#c080a0" stroke-width="1"/>
<path d="M182 314 V230.5 H328 V314 Z" fill="none" stroke="#000" stroke-width="1.2"/>
<line x1="240" y1="314" x2="272" y2="314" stroke="#20c020" stroke-width="1.5"/>
<line x1="257" y1="314" x2="257" y2="325" stroke="#20c020" stroke-width="1"/>
<circle cx="182" cy="230.5" r="2.1" fill="#3a7ad4"/>
<circle cx="328" cy="230.5" r="2.1" fill="#3a7ad4"/>
<circle cx="182" cy="314" r="2.1" fill="#3a7ad4"/>
<circle cx="328" cy="314" r="2.1" fill="#3a7ad4"/>
<circle cx="200" cy="314" r="2.1" fill="#3a7ad4"/>
<circle cx="311" cy="314" r="2.1" fill="#3a7ad4"/>
<g clip-path="url(#c3d)">
<rect x="371" y="225" width="229" height="177" fill="#575757"/>
<g stroke="#e8e8e8" stroke-width="1.1" stroke-dasharray="3 1.2" opacity="0.9">
<line x1="127.2" y1="273.4" x2="530.1" y2="218.0"/>
<line x1="115.2" y1="279.4" x2="538.8" y2="218.5"/>
<line x1="100.9" y1="286.5" x2="548.2" y2="219.1"/>
<line x1="83.8" y1="295.0" x2="558.3" y2="219.7"/>
<line x1="62.7" y1="305.6" x2="569.1" y2="220.3"/>
<line x1="36.3" y1="318.8" x2="580.7" y2="220.9"/>
<line x1="1.9" y1="335.9" x2="593.3" y2="221.7"/>
<line x1="-44.3" y1="359.0" x2="606.9" y2="222.5"/>
<line x1="-110.0" y1="391.8" x2="621.7" y2="223.3"/>
<line x1="-210.6" y1="442.1" x2="637.9" y2="224.3"/>
<line x1="-384.2" y1="528.8" x2="655.6" y2="225.3"/>
<line x1="-755.0" y1="714.0" x2="675.1" y2="226.4"/>
<line x1="-1334.6" y1="1069.1" x2="696.7" y2="227.6"/>
<line x1="-812.4" y1="1049.9" x2="720.7" y2="229.0"/>
<line x1="-285.4" y1="1030.5" x2="747.5" y2="230.6"/>
<line x1="258.9" y1="992.9" x2="777.8" y2="232.3"/>
<line x1="784.2" y1="973.5" x2="812.1" y2="234.3"/>
<line x1="127.2" y1="273.4" x2="-1498.0" y2="1085.2"/>
<line x1="165.5" y1="268.1" x2="-1075.7" y2="1055.8"/>
<line x1="199.8" y1="263.4" x2="-682.8" y2="1043.2"/>
<line x1="230.6" y1="259.2" x2="-285.4" y2="1030.5"/>
<line x1="258.5" y1="255.3" x2="119.7" y2="1001.9"/>
<line x1="283.9" y1="251.8" x2="518.8" y2="989.1"/>
<line x1="307.0" y1="248.7" x2="790.0" y2="819.4"/>
<line x1="328.2" y1="245.8" x2="798.9" y2="582.4"/>
<line x1="347.7" y1="243.1" x2="803.0" y2="473.4"/>
<line x1="365.7" y1="240.6" x2="805.4" y2="410.8"/>
<line x1="382.3" y1="238.3" x2="806.9" y2="370.1"/>
<line x1="397.8" y1="236.2" x2="808.0" y2="341.6"/>
<line x1="412.2" y1="234.2" x2="808.8" y2="320.5"/>
<line x1="425.6" y1="232.4" x2="809.4" y2="304.2"/>
<line x1="438.2" y1="230.6" x2="809.9" y2="291.3"/>
<line x1="450.0" y1="229.0" x2="810.3" y2="280.8"/>
<line x1="461.0" y1="227.5" x2="810.6" y2="272.1"/>
<line x1="471.4" y1="226.1" x2="810.9" y2="264.8"/>
<line x1="481.3" y1="224.7" x2="811.1" y2="258.5"/>
<line x1="490.5" y1="223.5" x2="811.3" y2="253.1"/>
<line x1="499.3" y1="222.2" x2="811.5" y2="248.4"/>
<line x1="507.6" y1="221.1" x2="811.7" y2="244.3"/>
<line x1="515.5" y1="220.0" x2="811.8" y2="240.6"/>
<line x1="522.9" y1="219.0" x2="811.9" y2="237.3"/>
<line x1="530.1" y1="218.0" x2="812.1" y2="234.3"/>
</g>
<filter id="nz" x="0" y="0" width="100%" height="100%"><feTurbulence type="fractalNoise" baseFrequency="0.9" numOctaves="2" seed="3"/><feColorMatrix values="0 0 0 0 0  0 0 0 0 0  0 0 0 0 0  0 0 0 -1.2 1.1"/><feComposite in2="SourceGraphic" operator="in"/></filter>
<polygon points="480,281 517,274.7 519.5,295 486,286" fill="#858178"/>
<polygon points="384.5,263.5 482.6,245.5 531,256 421.7,283" fill="#4b4a44"/>
<polygon points="384.5,263.5 421.7,283 427.4,336 388,311.5" fill="#5c5a55"/>
<polygon points="421.7,283 531,256 527.5,294.5 519.5,295 516.6,274.7 441.6,296 441.6,334.5 427.4,336" fill="#8c887f"/>
<g filter="url(#nz)" opacity="0.18"><polygon points="384.5,263.5 482.6,245.5 531,256 527.5,294.5 519.5,295 516.6,274.7 441.6,296 441.6,334.5 427.4,336 388,311.5" fill="#000"/></g>
</g>
</svg>
</div></body></html>
